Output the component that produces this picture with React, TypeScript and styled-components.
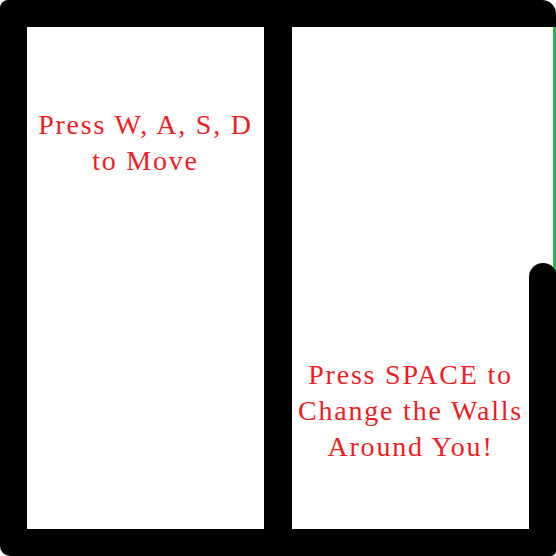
import { createGlobalStyle } from 'styled-components'
import styled from 'styled-components'

const WALL = '#000'
const FLOOR = '#fff'
const EXIT = '#2eb34f'
const INK = '#ee1c25'

const GlobalStyle = createGlobalStyle`
  html, body {
    margin: 0;
    padding: 0;
    background: #fff;
  }
`

const Board = styled.div`
  width: 556px;
  height: 556px;
  box-sizing: border-box;
  display: flex;
  gap: 28px;
  padding: 27px 0 27px 27px;
  background: ${WALL};
  border-radius: 8px 14px 5px 10px;
  font-family: 'Liberation Serif', 'DejaVu Serif', serif;
`

const Room = styled.div<{ $top: number }>`
  flex: 1;
  background: ${FLOOR};
  padding-top: ${({ $top }) => $top}px;
  text-align: center;
`

const LeftRoom = styled(Room)`
  flex: 0 0 237px;
`

const RightSide = styled.div`
  flex: 1;
  display: flex;
`

const Edge = styled.div`
  flex: 0 0 27px;
  display: flex;
  flex-direction: column;
  justify-content: flex-end;
  background: linear-gradient(to right, ${FLOOR} 24px, ${EXIT} 24px);
`

const EdgeWall = styled.div<{ $height: number }>`
  height: ${({ $height }) => $height}px;
  margin-right: -1px;
  background: ${WALL};
  border-radius: 14px 14px 0 0;
`

const Hint = styled.p`
  margin: 0;
  color: ${INK};
  font-size: 28px;
  line-height: 36px;
  letter-spacing: 1.8px;
`

export default function App() {
  return (
    <>
      <GlobalStyle />
      <Board>
        <LeftRoom $top={80}>
          <Hint>
            Press W, A, S, D
            <br />
            to Move
          </Hint>
        </LeftRoom>
        <RightSide>
          <Room $top={330}>
            <Hint>
              Press SPACE to
              <br />
              Change the Walls
              <br />
              Around You!
            </Hint>
          </Room>
          <Edge>
            <EdgeWall $height={266} />
          </Edge>
        </RightSide>
      </Board>
    </>
  )
}
